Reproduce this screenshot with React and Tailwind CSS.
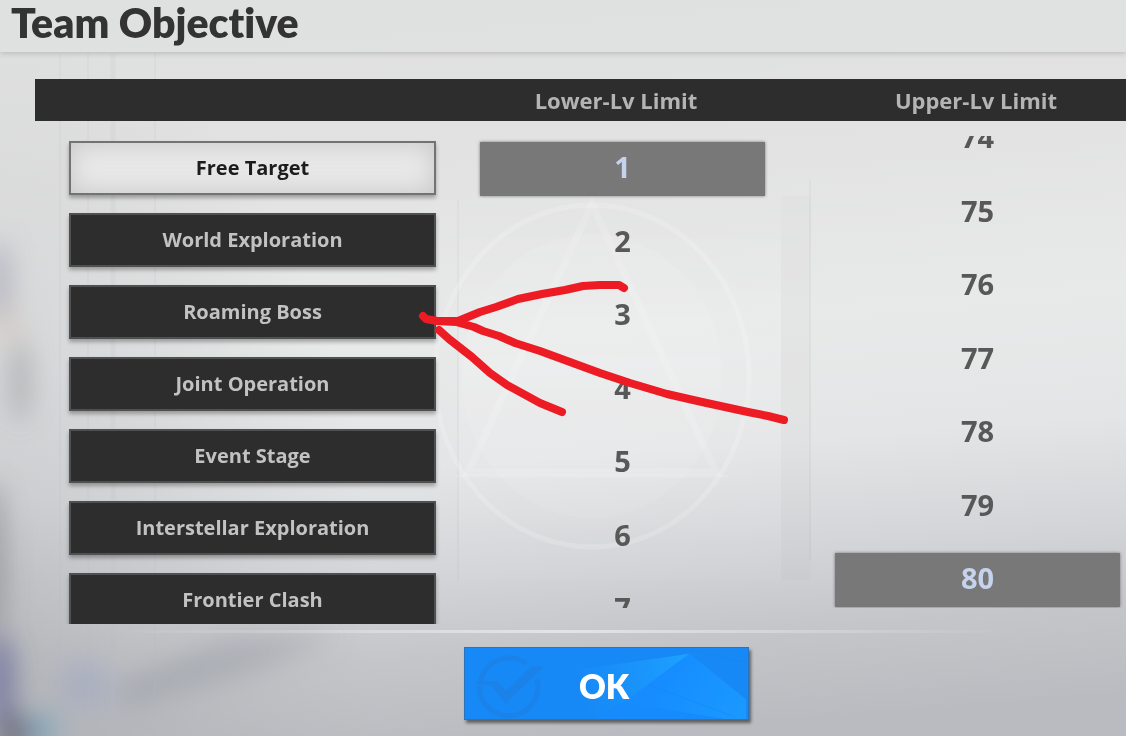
import { useState } from "react";
import clsx from "clsx";

const TARGETS = [
	"Free Target",
	"World Exploration",
	"Roaming Boss",
	"Joint Operation",
	"Event Stage",
	"Interstellar Exploration",
	"Frontier Clash",
];

const LOWER_LEVELS = [1, 2, 3, 4, 5, 6, 7];
const UPPER_LEVELS = [74, 75, 76, 77, 78, 79, 80];

const Backdrop = () => (
	<svg
		className="absolute inset-0 -z-10 h-full w-full"
		viewBox="0 0 1126 736"
		preserveAspectRatio="xMidYMid slice"
		aria-hidden="true"
	>
		<defs>
			<linearGradient id="wall" x1="0.44" y1="0" x2="0.56" y2="1">
				<stop offset="0" stopColor="#dfe0e0" />
				<stop offset="0.2" stopColor="#e2e2e2" />
				<stop offset="0.45" stopColor="#e8e9e9" />
				<stop offset="0.62" stopColor="#e4e5e6" />
				<stop offset="0.77" stopColor="#d3d4d7" />
				<stop offset="0.87" stopColor="#c5c6ca" />
				<stop offset="1" stopColor="#babbc0" />
			</linearGradient>
			<radialGradient id="leftShade" cx="0" cy="0.85" r="0.9">
				<stop offset="0" stopColor="#94989d" stopOpacity="0.4" />
				<stop offset="0.5" stopColor="#9a9ea4" stopOpacity="0.2" />
				<stop offset="1" stopColor="#a5a9ad" stopOpacity="0" />
			</radialGradient>
			<linearGradient id="fadeDown" x1="0" y1="0" x2="0" y2="1">
				<stop offset="0" stopColor="#fff" stopOpacity="0" />
				<stop offset="0.4" stopColor="#fff" stopOpacity="0.15" />
				<stop offset="1" stopColor="#fff" stopOpacity="0" />
			</linearGradient>
			<filter id="soft" x="-50%" y="-50%" width="200%" height="200%">
				<feGaussianBlur stdDeviation="12" />
			</filter>
		</defs>
		<rect width="1126" height="736" fill="url(#wall)" />
		<rect y="54" width="420" height="682" fill="url(#leftShade)" />

		{/* Out-of-focus shapes along the left edge */}
		<g filter="url(#soft)">
			<ellipse cx="0" cy="285" rx="12" ry="45" fill="#a4a3b2" opacity="0.6" />
			<ellipse cx="10" cy="325" rx="14" ry="18" fill="#d6ccc4" opacity="0.7" />
			<ellipse cx="20" cy="380" rx="13" ry="42" fill="#898b8e" opacity="0.4" />
			<ellipse cx="-6" cy="560" rx="12" ry="80" fill="#77777c" opacity="0.5" />
			<ellipse cx="0" cy="680" rx="16" ry="46" fill="#5d5f94" opacity="0.6" />
			<ellipse cx="85" cy="685" rx="26" ry="26" fill="#9aa5c4" opacity="0.4" />
			<ellipse cx="15" cy="734" rx="22" ry="22" fill="#55556a" opacity="0.6" />
			<ellipse cx="44" cy="728" rx="14" ry="14" fill="#78a5bb" opacity="0.8" />
			<path d="M120 680L230 635H340L250 675L120 712Z" fill="#92999f" opacity="0.4" />
		</g>
		<g stroke="#b9bacb" strokeOpacity="0.25">
			<path d="M60 54V736M88 54V736M155 54V736" />
			<path d="M113 54V736" strokeWidth="5" strokeOpacity="0.15" />
		</g>

		{/* Wall panels */}
		<rect x="459" y="196" width="322" height="420" fill="url(#fadeDown)" />
		<rect x="781" y="196" width="30" height="384" fill="#999" opacity="0.04" />
		<path d="M458 200V580M810 180V560" stroke="#999" strokeOpacity="0.08" strokeWidth="2" />

		{/* Emblem */}
		<g fill="none" stroke="#fff">
			<ellipse cx="592" cy="376" rx="157" ry="171" strokeOpacity="0.16" strokeWidth="5" />
			<ellipse cx="592" cy="376" rx="130" ry="142" fill="#fff" fillOpacity="0.08" stroke="none" />
			<path d="M592 204L468 472H716Z" strokeOpacity="0.12" strokeWidth="7" />
			<path d="M456 476H728" strokeOpacity="0.12" strokeWidth="3" />
		</g>
	</svg>
);

const RedMarks = () => (
	<svg
		className="pointer-events-none absolute left-[415px] top-[275px] h-[155px] w-[380px]"
		viewBox="415 275 380 155"
		fill="none"
		stroke="#ed1c24"
		strokeWidth="8"
		strokeLinecap="round"
		strokeLinejoin="round"
		aria-hidden="true"
	>
		<path d="M423 316L426 319L437 321H458L480 312L496 307L518 299L542 294L565 290L583 286L600 285H619L624 288" />
		<path d="M437 321L456 322L474 327L483 331L499 336L515 343L540 351L570 362L600 373L630 383L667 394L702 402L748 412L768 416L784 420" />
		<path d="M439 330L449 339L472 357L490 373L507 385L540 403L562 412" />
	</svg>
);

const TargetButton = ({ label, selected, onSelect }) => (
	<button
		type="button"
		aria-pressed={selected}
		onClick={onSelect}
		className={clsx(
			"h-[54px] w-full shrink-0 cursor-pointer border-2 text-[20px] leading-6 font-bold shadow-[0_3px_4px_rgba(0,0,0,0.3)]",
			selected
				? "border-[#737373] bg-[#e8e8e8] text-[#1c1c1c] inset-shadow-[0_0_24px_#c6c6c6]"
				: "border-[#505050] bg-[#2d2d2d] text-[#c2c2c2]"
		)}
	>
		{label}
	</button>
);

const LevelColumn = ({ label, levels, value, onSelect, className }) => (
	<div role="group" aria-label={label} className="flex h-[472px] flex-col overflow-hidden">
		<div className={clsx("flex h-[495px] shrink-0 flex-col justify-between px-1", className)}>
			{levels.map((level) => (
				<button
					key={level}
					type="button"
					aria-pressed={level === value}
					onClick={() => onSelect(level)}
					className={clsx(
						"h-[54px] cursor-pointer pb-1 text-[29px] leading-9 font-bold",
						level === value
							? "bg-[#787878] text-[#c6d3ec] shadow-[0_0_3px_#787878]"
							: "text-[#585858]"
					)}
				>
					{level}
				</button>
			))}
		</div>
	</div>
);

const App = () => {
	const [target, setTarget] = useState("Free Target");
	const [lower, setLower] = useState(1);
	const [upper, setUpper] = useState(80);

	return (
		<div className="relative isolate min-h-screen overflow-hidden font-['Open_Sans',sans-serif]">
			<Backdrop />

			<header className="flex h-[52px] items-center bg-[#e0e1e1]/60 px-[11px] pb-1.5 shadow-[0_1px_6px_rgba(0,0,0,0.2)]">
				<h1 className="font-[Lato,sans-serif] text-[41px] leading-[44px] font-extrabold text-[#333333] [font-variant-ligatures:none]">
					Team Objective
				</h1>
			</header>

			<main className="pt-[27px]">
				<div className="ml-[35px] grid h-[42px] grid-cols-[401px_360fr_330fr] items-center bg-[#2d2d2d] text-center text-[22px] leading-7 font-bold text-[#b4b4b4]">
					<span />
					<h2>Lower-Lv Limit</h2>
					<h2 className="pl-[30px]">Upper-Lv Limit</h2>
				</div>

				<div className="ml-[35px] grid h-[503px] grid-cols-[401px_360fr_330fr] overflow-hidden">
					<div className="flex flex-col gap-[18px] pt-5 pl-[34px]">
						{TARGETS.map((label) => (
							<TargetButton
								key={label}
								label={label}
								selected={label === target}
								onSelect={() => setTarget(label)}
							/>
						))}
					</div>
					<div className="pt-[15px] pr-[27px] pl-10">
						<LevelColumn
							label="Lower-Lv Limit"
							levels={LOWER_LEVELS}
							value={lower}
							onSelect={setLower}
							className="mt-[6px]"
						/>
					</div>
					<div className="pt-[15px] pr-[2px] pl-[35px]">
						<LevelColumn
							label="Upper-Lv Limit"
							levels={UPPER_LEVELS}
							value={upper}
							onSelect={setUpper}
							className="-mt-6"
						/>
					</div>
				</div>

				<div className="mx-[100px] mt-[6px] h-[3px] bg-linear-to-r from-transparent via-white/50 to-transparent" />

				<div className="flex justify-center pt-[14px] pb-4 pl-[86px]">
					<button
						type="button"
						className="relative isolate h-[73px] w-[285px] cursor-pointer overflow-hidden border border-[#2a73bd] bg-[#1789f6] pt-1 pr-1 font-[Lato,sans-serif] text-[33px] leading-10 font-extrabold text-white shadow-[2px_3px_3px_rgba(0,0,0,0.5)]"
					>
						<svg
							className="absolute inset-0 -z-10 h-full w-full"
							viewBox="0 0 285 73"
							fill="none"
							aria-hidden="true"
						>
							<defs>
								<linearGradient id="facet" x1="115" y1="40" x2="228" y2="6" gradientUnits="userSpaceOnUse">
									<stop stopColor="#1b9bff" stopOpacity="0" />
									<stop offset="1" stopColor="#1ea2ff" />
								</linearGradient>
								<linearGradient id="facetRight" x1="200" y1="20" x2="285" y2="70" gradientUnits="userSpaceOnUse">
									<stop stopColor="#168cff" />
									<stop offset="1" stopColor="#1a99ff" />
								</linearGradient>
							</defs>
							<path d="M115 22L228 6L160 56L128 73H115Z" fill="url(#facet)" />
							<path d="M228 6L286 53V74H128L160 56Z" fill="url(#facetRight)" />
							<path d="M160 56L270 74H128Z" fill="#168bfb" />
							<path d="M186 38L275 71" stroke="#1783ec" strokeOpacity="0.5" />
							<path d="M228 2L285 15" stroke="#1783ec" strokeOpacity="0.6" />
							<path d="M60 16A30 30 0 0 0 13 34" stroke="#1a82e8" strokeWidth="5" />
							<path d="M12 39A30 30 0 1 0 71 32" stroke="#1a82e8" strokeWidth="5" />
							<path d="M9 34H30L39 44L65 19H78L39 57L23 38H9Z" fill="#1a82e8" />
						</svg>
						OK
					</button>
				</div>
			</main>

			<RedMarks />
		</div>
	);
};

export default App;
